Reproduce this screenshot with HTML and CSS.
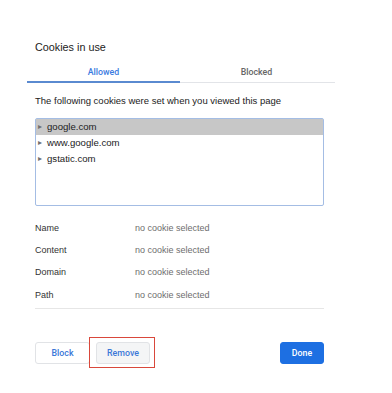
FILE: index.html
```html
<!DOCTYPE html>
<html lang="en">
<head>
  <meta charset="UTF-8" />
  <meta name="viewport" content="width=device-width, initial-scale=1.0"/>
  <title>Cookies in use</title>
  <link rel="stylesheet" href="styles.css">
</head>
<body>
  <div class="dialog">
    <h2 class="title">Cookies in use</h2>

    <!-- Tabs -->
    <div class="tabs">
      <div class="tab active">Allowed</div>
      <div class="tab">Blocked</div>
    </div>

    <div class="content">
      <p class="intro">The following cookies were set when you viewed this page</p>

      <div class="tree">
        <div class="tree-row selected"><span class="arrow">&#9656;</span>google.com</div>
        <div class="tree-row"><span class="arrow">&#9656;</span>www.google.com</div>
        <div class="tree-row"><span class="arrow">&#9656;</span>gstatic.com</div>
      </div>

      <div class="details">
        <div class="detail-row"><span class="label">Name</span><span class="value">no cookie selected</span></div>
        <div class="detail-row"><span class="label">Content</span><span class="value">no cookie selected</span></div>
        <div class="detail-row"><span class="label">Domain</span><span class="value">no cookie selected</span></div>
        <div class="detail-row"><span class="label">Path</span><span class="value">no cookie selected</span></div>
      </div>

      <div class="actions">
        <button class="btn">Block</button>
        <span class="highlight"><button class="btn btn-grey">Remove</button></span>
        <button class="btn btn-primary">Done</button>
      </div>
    </div>
  </div>
</body>
</html>
```

FILE: styles.css
```css
* {
  box-sizing: border-box;
  margin: 0;
  padding: 0;
}

body {
  font-family: 'Liberation Sans', Arial, Helvetica, sans-serif;
  background-color: #fff;
  color: #222;
  width: 392px;
  height: 393px;
}

.dialog {
  padding: 40px 0 0 27px;
}

.title {
  font-size: 10.8px;
  font-weight: normal;
  color: #222;
  padding-left: 8px;
  line-height: 14px;
  margin-bottom: 11px;
}

.tabs {
  display: flex;
  width: 308px;
  border-bottom: 1px solid #e2e4e8;
}

.tab {
  width: 153px;
  text-align: center;
  font-family: Roboto, 'Liberation Sans', sans-serif;
  font-size: 8.8px;
  font-weight: 500;
  color: #666;
  line-height: 12px;
  padding-top: 1px;
  padding-bottom: 3px;
  margin-bottom: -1px;
  border-bottom: 2px solid transparent;
}

.tab.active {
  color: #3b7be0;
  border-bottom-color: #5a8ad0;
}

.content {
  padding-left: 8px;
  width: 297px;
}

.intro {
  font-size: 9.5px;
  color: #222;
  line-height: 12px;
  margin-top: 12px;
  margin-bottom: 11px;
}

.tree {
  width: 289px;
  height: 88px;
  border: 1px solid #a4bde4;
  border-radius: 2px;
}

.tree-row {
  font-size: 9.6px;
  color: #222;
  height: 16px;
  line-height: 16px;
  padding-left: 2px;
  display: flex;
  align-items: center;
}

.tree-row.selected {
  background-color: #c7c7c7;
}

.arrow {
  font-size: 8px;
  color: #707070;
  width: 9px;
  display: inline-block;
}

.details {
  width: 289px;
  margin-top: 10px;
  border-bottom: 1px solid #e6e6e6;
  padding-bottom: 3px;
}

.detail-row {
  display: flex;
  height: 22.3px;
  align-items: center;
  font-size: 9px;
  padding-top: 1px;
}

.label {
  width: 100px;
  color: #333;
}

.value {
  color: #6e6e6e;
}

.actions {
  display: flex;
  align-items: center;
  width: 289px;
  margin-top: 33px;
}

.btn {
  font-family: Roboto, 'Liberation Sans', sans-serif;
  font-size: 8.8px;
  font-weight: 500;
  color: #3b78d8;
  background-color: #fff;
  border: 1px solid #e1e3e6;
  border-radius: 3px;
  height: 22px;
  width: 55px;
}

.btn-grey {
  background-color: #f4f5f6;
  width: 54px;
}

.btn-primary {
  margin-left: auto;
  width: 44px;
  background-color: #1d6fe2;
  border-color: #1d6fe2;
  color: #fff;
}

.highlight {
  position: relative;
  display: inline-flex;
  margin-left: 6px;
}

.highlight::after {
  content: '';
  position: absolute;
  top: -5px;
  bottom: -4px;
  left: -7px;
  right: -5px;
  border: 1.5px solid #d9483b;
}
```
